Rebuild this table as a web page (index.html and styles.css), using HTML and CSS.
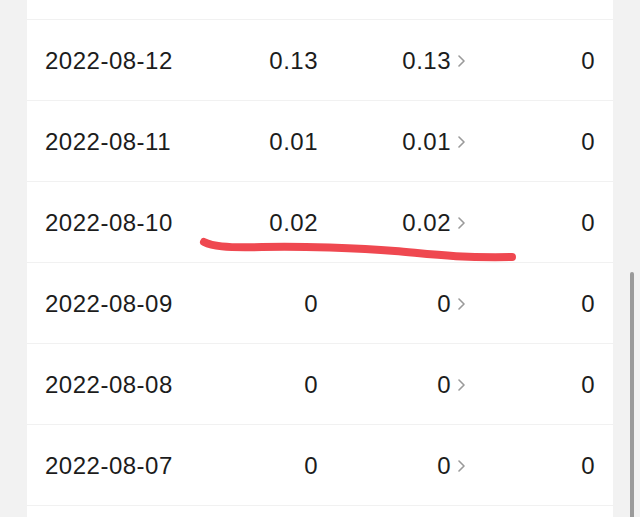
FILE: index.html
```html
<!DOCTYPE html>
<html lang="zh">
<head>
<meta charset="utf-8">
<link rel="stylesheet" href="styles.css">
</head>
<body>
<div class="page">
  <div class="card">
    <div class="row"><span class="c1"></span><span class="c2"></span><span class="c3"></span><span class="c4"></span></div>
    <div class="row">
      <span class="c1">2022-08-12</span><span class="c2">0.13</span>
      <span class="c3">0.13<svg class="chev" viewBox="0 0 7 12" width="7" height="12"><path d="M1 1 L6 6 L1 11"/></svg></span>
      <span class="c4">0</span>
    </div>
    <div class="row">
      <span class="c1">2022-08-11</span><span class="c2">0.01</span>
      <span class="c3">0.01<svg class="chev" viewBox="0 0 7 12" width="7" height="12"><path d="M1 1 L6 6 L1 11"/></svg></span>
      <span class="c4">0</span>
    </div>
    <div class="row">
      <span class="c1">2022-08-10</span><span class="c2">0.02</span>
      <span class="c3">0.02<svg class="chev" viewBox="0 0 7 12" width="7" height="12"><path d="M1 1 L6 6 L1 11"/></svg></span>
      <span class="c4">0</span>
    </div>
    <div class="row">
      <span class="c1">2022-08-09</span><span class="c2">0</span>
      <span class="c3">0<svg class="chev" viewBox="0 0 7 12" width="7" height="12"><path d="M1 1 L6 6 L1 11"/></svg></span>
      <span class="c4">0</span>
    </div>
    <div class="row">
      <span class="c1">2022-08-08</span><span class="c2">0</span>
      <span class="c3">0<svg class="chev" viewBox="0 0 7 12" width="7" height="12"><path d="M1 1 L6 6 L1 11"/></svg></span>
      <span class="c4">0</span>
    </div>
    <div class="row">
      <span class="c1">2022-08-07</span><span class="c2">0</span>
      <span class="c3">0<svg class="chev" viewBox="0 0 7 12" width="7" height="12"><path d="M1 1 L6 6 L1 11"/></svg></span>
      <span class="c4">0</span>
    </div>
    <div class="row"><span class="c1"></span><span class="c2"></span><span class="c3"></span><span class="c4"></span></div>
  </div>
  <svg class="scribble" viewBox="0 0 640 517" width="640" height="517">
    <path d="M204 242 C 212 246, 224 248, 262 247 S 360 248, 395 251 S 455 258, 512 257"/>
  </svg>
  <div class="scrollbar"></div>
</div>
</body>
</html>
```
FILE: styles.css
```css
html, body {
  margin: 0;
  padding: 0;
  background: #f2f2f2;
  overflow: hidden;
}
.page {
  position: relative;
  width: 640px;
  height: 517px;
  overflow: hidden;
  padding-left: 27px;
  box-sizing: border-box;
}
.card {
  width: 586px;
  background: #ffffff;
  margin-top: -62px;
}
.row {
  display: grid;
  grid-template-columns: 173px 100px 147px 130px;
  align-items: center;
  height: 80px;
  padding: 2px 18px 0;
  box-sizing: content-box;
  border-top: 1px solid #f1f1f1;
  font-family: "Liberation Sans", Arial, sans-serif;
  font-size: 24px;
  letter-spacing: 0.5px;
  color: #1c1c1c;
}
.row {
  height: 78px;
}
.row:first-child {
  border-top: none;
  height: 79px;
}
.c2, .c4 {
  text-align: right;
}
.c3 {
  display: flex;
  justify-content: flex-end;
  align-items: center;
}
.chev {
  margin-left: 7px;
  fill: none;
  stroke: #9a9a9a;
  stroke-width: 1.6;
  stroke-linecap: round;
  stroke-linejoin: round;
}
.scribble {
  position: absolute;
  left: 0;
  top: 0;
  pointer-events: none;
}
.scribble path {
  fill: none;
  stroke: #ef4850;
  stroke-width: 8;
  stroke-linecap: round;
}
.scrollbar {
  position: absolute;
  left: 630px;
  top: 272px;
  width: 4px;
  height: 260px;
  background: #9b9b9b;
  border-radius: 2px;
}
```
